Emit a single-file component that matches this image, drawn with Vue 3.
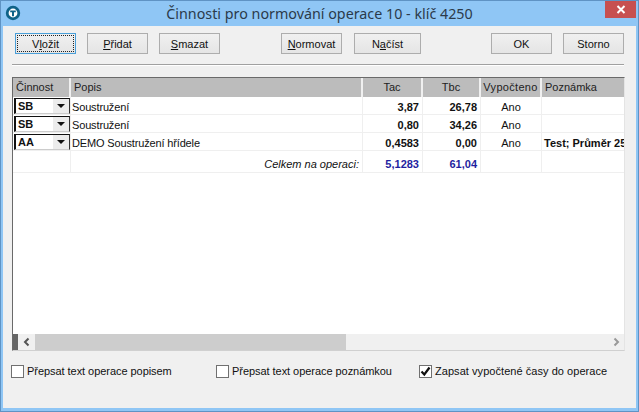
<script setup>
const columns = [
  { label: 'Činnost', cls: 'left first' },
  { label: 'Popis', cls: 'left popis' },
  { label: 'Tac', cls: 'center' },
  { label: 'Tbc', cls: 'center' },
  { label: 'Vypočteno', cls: 'center wide-label' },
  { label: 'Poznámka', cls: 'left' }
]
const rows = [
  { code: 'SB', text: 'Soustružení', tac: '3,87', tbc: '26,78', calc: 'Ano', note: '' },
  { code: 'SB', text: 'Soustružení', tac: '0,80', tbc: '34,26', calc: 'Ano', note: '' },
  { code: 'AA', text: 'DEMO Soustružení hřídele', tac: '0,4583', tbc: '0,00', calc: 'Ano', note: 'Test; Průměr 25' }
]
</script>

<template>
  <div class="window">
    <header class="titlebar">
      <svg class="logo" width="16" height="16" viewBox="0 0 16 16">
        <circle cx="8" cy="8" r="5.800" fill="#fff" stroke="#0f6288" stroke-width="2.800" />
        <path d="M5.200 5.400h5.600v1.800H9v4H7v-4H5.200z" fill="#0f6288" />
      </svg>
      <h1 class="title">Činnosti pro normování operace 10 - klíč 4250</h1>
      <button class="close" type="button">
        <svg width="10" height="9" viewBox="0 0 10 9">
          <path d="M1.500 1l7 7M8.500 1l-7 7" stroke="#fff" stroke-width="2" fill="none" />
        </svg>
      </button>
    </header>

    <main class="body">
      <div class="toolbar">
        <div class="group">
          <button class="btn focus" type="button">V<u>l</u>ožit</button>
          <button class="btn" type="button"><u>P</u>řidat</button>
          <button class="btn" type="button"><u>S</u>mazat</button>
        </div>
        <div class="group mid">
          <button class="btn" type="button"><u>N</u>ormovat</button>
          <button class="btn wide" type="button">N<u>a</u>číst</button>
        </div>
        <div class="group end">
          <button class="btn" type="button">OK</button>
          <button class="btn" type="button">Storno</button>
        </div>
      </div>
      <div class="rule"></div>

      <section class="table">
        <div class="grid head">
          <div v-for="c in columns" :key="c.label" class="th" :class="c.cls">{{ c.label }}</div>
        </div>
        <div v-for="(r, i) in rows" :key="i" class="grid row">
          <div class="td combo-cell">
            <div class="combo">
              <span class="code">{{ r.code }}</span>
              <span class="arrow"><i></i></span>
            </div>
          </div>
          <div class="td text">{{ r.text }}</div>
          <div class="td num">{{ r.tac }}</div>
          <div class="td num">{{ r.tbc }}</div>
          <div class="td mid-text">{{ r.calc }}</div>
          <div class="td note">{{ r.note }}</div>
        </div>
        <div class="grid row total">
          <div class="td"></div>
          <div class="td sum-label">Celkem na operaci:</div>
          <div class="td num blue">5,1283</div>
          <div class="td num blue">61,04</div>
          <div class="td"></div>
          <div class="td"></div>
        </div>
        <div class="fill"></div>
        <div class="scroll">
          <span class="strip"></span>
          <span class="sbtn">
            <svg width="8" height="10" viewBox="0 0 8 10"><path d="M5.500 1.500L2 5l3.500 3.500" fill="none" stroke="#555" stroke-width="2" /></svg>
          </span>
          <span class="thumb"></span>
          <span class="track"></span>
          <span class="sbtn">
            <svg width="8" height="10" viewBox="0 0 8 10"><path d="M2.500 1.500L6 5 2.500 8.500" fill="none" stroke="#999" stroke-width="2" /></svg>
          </span>
        </div>
      </section>

      <div class="checks">
        <label class="check c1"><span class="box"></span>Přepsat text operace popisem</label>
        <label class="check c2"><span class="box"></span>Přepsat text operace poznámkou</label>
        <label class="check c3">
          <span class="box">
            <svg width="11" height="11" viewBox="0 0 11 11"><path d="M1.500 5.500l2.800 3L9.500 1.500" fill="none" stroke="#111" stroke-width="2.200" /></svg>
          </span>
          Zapsat vypočtené časy do operace
        </label>
      </div>
    </main>
  </div>
</template>

<style>
html, body { margin: 0; padding: 0; background: #8cc3f3; }
</style>

<style scoped>
.window {
  width: 639px;
  height: 412px;
  box-sizing: border-box;
  display: flex;
  flex-direction: column;
  background: #8fc6f5;
  border: 1px solid #5f93c4;
  font-family: "Liberation Sans", Arial, sans-serif;
  font-size: 11px;
  color: #111;
  overflow: hidden;
}
.titlebar {
  height: 25px;
  flex: none;
  display: flex;
  align-items: center;
  position: relative;
  justify-content: center;
}
.logo { position: absolute; left: 4px; top: 4px; }
.title {
  margin: 0;
  font-family: "Noto Sans", sans-serif;
  font-weight: 400;
  font-size: 14.3px;
  color: #2b3a4a;
}
.close {
  position: absolute;
  right: 2px;
  top: 0;
  width: 31px;
  height: 17px;
  padding: 0;
  border: 0;
  background: #c75050;
  display: flex;
  align-items: center;
  justify-content: center;
}
.body {
  flex: 1;
  margin: 0 2px 3px;
  background: #f0f0f0;
  padding: 7px 11px 0 9px;
  display: flex;
  flex-direction: column;
  min-height: 0;
}
.toolbar { display: flex; height: 21px; flex: none; }
.group { display: flex; gap: 11px; padding-left: 3px; }
.group.mid { margin-left: 61px; padding-left: 0; gap: 12px; }
.group.end { margin-left: auto; padding-left: 0; gap: 11px; padding-right: 1px; }
.btn {
  width: 61px;
  height: 21px;
  box-sizing: border-box;
  padding: 0;
  border: 1px solid #adadad;
  background: linear-gradient(#f0f0f0, #e5e5e5);
  font: inherit;
  color: #111;
}
.btn.wide { width: 67px; }
.btn.focus {
  border-color: #4a9fd8;
  outline: 1px dotted #222;
  outline-offset: -3px;
}
.rule {
  flex: none;
  height: 0;
  margin: 10px 1px 0 0;
  border-top: 1px solid #a0a0a0;
  border-bottom: 1px solid #fff;
}
.table {
  flex: none;
  margin-top: 11px;
  height: 274px;
  width: 613px;
  box-sizing: border-box;
  border-top: 1px solid #6a6a6a;
  border-left: 1px solid #6a6a6a;
  border-bottom: 1px solid #d0d0d0;
  border-right: 1px solid #e4e4e4;
  background: #fff;
  display: flex;
  flex-direction: column;
  overflow: hidden;
}
.grid {
  display: grid;
  grid-template-columns: 58px 292px 60px 58px 61px 1fr;
  flex: none;
}
.head {
  height: 19px;
  background: #bcbcbc;
}
.th {
  border-right: 2px solid #f0f0f0;
  line-height: 19px;
  padding-left: 3px;
  box-sizing: border-box;
  color: #222;
}
.th:last-child { border-right: 0; }
.th.center { text-align: center; padding-left: 0; }
.th.wide-label { letter-spacing: 0.3px; white-space: nowrap; }
.row { height: 18px; border-bottom: 1px solid #efefef; box-sizing: border-box; }
.row.total { height: 22px; }
.td {
  border-right: 1px solid #efefef;
  line-height: 20px;
  overflow: hidden;
  white-space: nowrap;
  box-sizing: border-box;
  min-width: 0;
}
.td:last-child { border-right: 0; }
.combo-cell { padding: 1px 0 0 1px; }
.combo {
  height: 16px;
  box-sizing: border-box;
  border: 1px solid #111;
  border-left-width: 2px;
  border-right-color: #333;
  border-bottom-color: #ccc;
  display: flex;
  justify-content: space-between;
  background: #fff;
}
.code { font-weight: 700; line-height: 14px; padding-left: 2px; }
.arrow {
  width: 16px;
  background: #ececec;
  border-left: 1px solid #fff;
  display: flex;
  align-items: center;
  justify-content: center;
}
.arrow i {
  width: 0;
  height: 0;
  border: 4px solid transparent;
  border-top: 4px solid #111;
  border-bottom: 0;
}
.text { padding-left: 1px; letter-spacing: -0.15px; }
.num { text-align: right; font-weight: 700; padding-right: 3px; }
.mid-text { text-align: center; }
.note { font-weight: 700; padding-left: 2px; text-overflow: clip; }
.total .td { line-height: 27px; }
.sum-label { text-align: right; font-style: italic; padding-right: 3px; }
.blue { color: #1f1fa0; }
.fill { flex: 1; }
.scroll {
  height: 16px;
  flex: none;
  display: flex;
  background: #f0f0f0;
}
.strip { width: 5px; background: #666; flex: none; }
.sbtn {
  width: 17px;
  flex: none;
  display: flex;
  align-items: center;
  justify-content: center;
}
.thumb { width: 311px; background: #cdcdcd; flex: none; }
.track { flex: 1; }
.checks {
  display: flex;
  margin-top: 13px;
  margin-left: -1px;
}
.check { display: flex; align-items: center; gap: 3px; height: 14px; line-height: 14px; }
.c1 { width: 205px; letter-spacing: -0.05px; }
.c2 { width: 203px; letter-spacing: -0.05px; }
.c3 { letter-spacing: 0.05px; }
.box {
  width: 13px;
  height: 13px;
  box-sizing: border-box;
  border: 1px solid #707070;
  background: #fff;
  display: flex;
  align-items: center;
  justify-content: center;
  flex: none;
}
</style>
